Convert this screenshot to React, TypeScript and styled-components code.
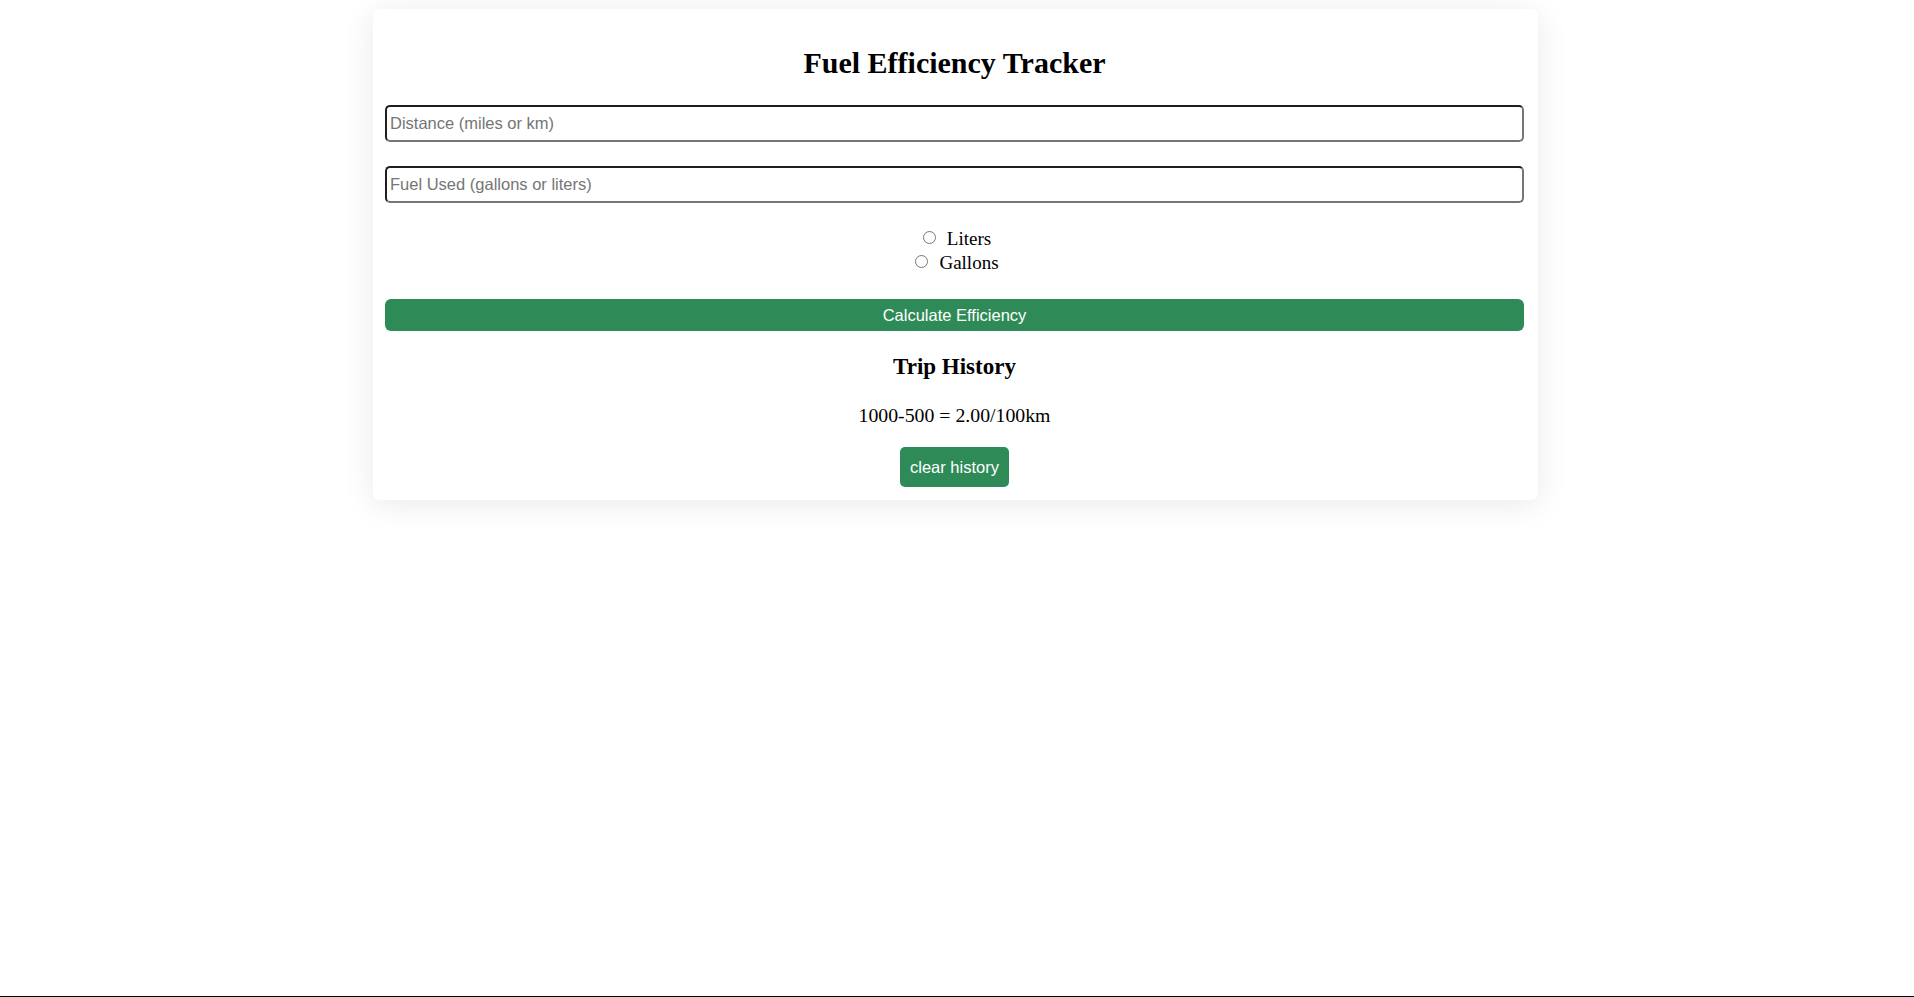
import React, { useState } from 'react'
import styled, { createGlobalStyle } from 'styled-components'

const GlobalStyle = createGlobalStyle`
  body {
    margin: 0;
    background: #ffffff;
    font-family: "Liberation Serif", "Times New Roman", serif;
    color: #000;
  }
`

const Page = styled.div`
  min-height: 100vh;
  box-sizing: border-box;
  border-bottom: 1px solid #000;
  padding: 9px 3px 0 0;
  display: flex;
  justify-content: center;
  align-items: flex-start;
`

const Card = styled.div`
  width: 1165px;
  box-sizing: border-box;
  padding: 12px 14px 13px 12px;
  background: #fff;
  border-radius: 7px;
  box-shadow: 0 4px 32px rgba(0, 0, 0, 0.09);
  display: flex;
  flex-direction: column;
  align-items: center;
`

const Title = styled.h2`
  margin: 25px 0;
  font-size: 30px;
  line-height: 34px;
  font-weight: bold;
`

const Input = styled.input`
  width: 100%;
  height: 37px;
  box-sizing: border-box;
  margin: 0 0 24px;
  padding: 8px 3px;
  font-family: "Liberation Sans", Arial, sans-serif;
  font-size: 16.5px;
  border: 2px solid;
  border-color: #1f1f1f #767676 #767676 #1f1f1f;
  border-radius: 5px;
  outline: none;
  &::placeholder {
    color: #757575;
  }
`

const Units = styled.div`
  display: flex;
  flex-direction: column;
  align-items: center;
  margin-bottom: 24px;
`

const RadioRow = styled.label`
  display: block;
  font-size: 19px;
  line-height: 24px;
  input {
    margin: 0 11px 0 5px;
    width: 13px;
    height: 13px;
    vertical-align: 1px;
  }
`

const Button = styled.button<{ $full?: boolean }>`
  background: #2e8b57;
  color: #fff;
  border: none;
  border-radius: ${p => (p.$full ? '6px' : '5px')};
  font-family: "Liberation Sans", Arial, sans-serif;
  font-size: 16.5px;
  width: ${p => (p.$full ? '100%' : 'auto')};
  height: ${p => (p.$full ? '32px' : '40px')};
  padding: ${p => (p.$full ? '0' : '0 10.5px')};
  cursor: pointer;
`

const SubTitle = styled.h3`
  margin: 23px 0 24px;
  font-size: 23px;
  line-height: 26px;
  font-weight: bold;
`

const HistoryItem = styled.p`
  margin: 0 0 20px;
  font-size: 19.8px;
  line-height: 23px;
`

export default function App() {
  const [unit, setUnit] = useState('')
  const history = ['1000-500 = 2.00/100km']

  return (
    <>
      <GlobalStyle />
      <Page>
        <Card>
          <Title>Fuel Efficiency Tracker</Title>
          <Input type="number" placeholder="Distance (miles or km)" />
          <Input type="number" placeholder="Fuel Used (gallons or liters)" />
          <Units>
            <RadioRow>
              <input type="radio" name="unit" checked={unit === 'liters'} onChange={() => setUnit('liters')} />
              Liters
            </RadioRow>
            <RadioRow>
              <input type="radio" name="unit" checked={unit === 'gallons'} onChange={() => setUnit('gallons')} />
              Gallons
            </RadioRow>
          </Units>
          <Button type="button" $full>Calculate Efficiency</Button>
          <SubTitle>Trip History</SubTitle>
          {history.map(h => (
            <HistoryItem key={h}>{h}</HistoryItem>
          ))}
          <Button type="button">clear history</Button>
        </Card>
      </Page>
    </>
  )
}
